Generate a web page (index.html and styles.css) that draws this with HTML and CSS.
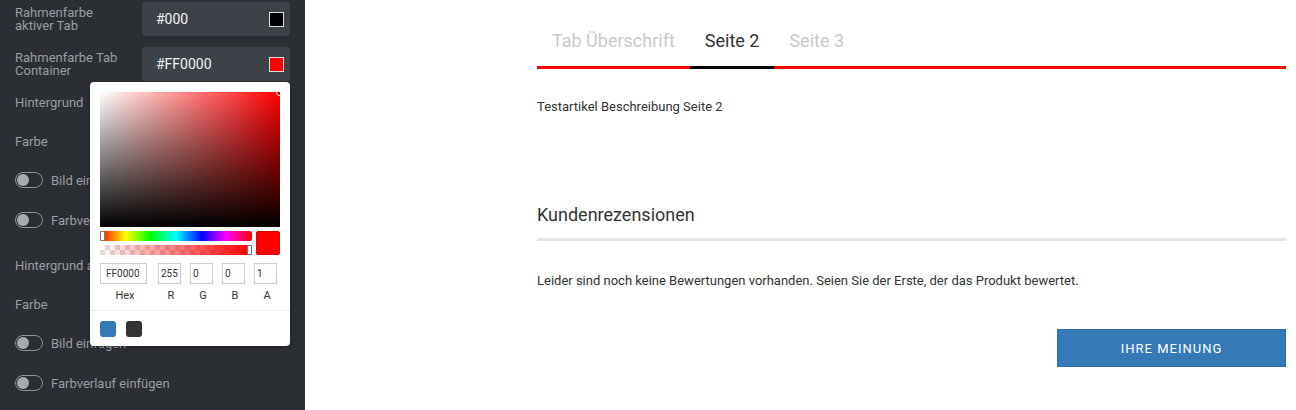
FILE: index.html
```html
<!DOCTYPE html>
<html lang="de">
<head>
<meta charset="utf-8">
<title>Tabs</title>
<link rel="stylesheet" href="styles.css">
</head>
<body>
<aside class="sidebar">
  <div class="field">
    <div class="field-label">Rahmenfarbe<br>aktiver Tab</div>
    <div class="color-input"><span>#000</span><i class="swatch swatch-black"></i></div>
  </div>
  <div class="field field-second">
    <div class="field-label">Rahmenfarbe Tab<br>Container</div>
    <div class="color-input"><span>#FF0000</span><i class="swatch swatch-red"></i></div>
  </div>
  <div class="row row-head">Hintergrund</div>
  <div class="row row-label">Farbe</div>
  <div class="row row-toggle"><span class="toggle"></span>Bild einfügen</div>
  <div class="row row-toggle"><span class="toggle"></span>Farbverlauf einfügen</div>
  <div class="row row-head row-head-2">Hintergrund aktiver Tab</div>
  <div class="row row-label">Farbe</div>
  <div class="row row-toggle"><span class="toggle"></span>Bild einfügen</div>
  <div class="row row-toggle"><span class="toggle"></span>Farbverlauf einfügen</div>

  <div class="picker">
    <div class="sat"><span class="sat-dot"></span></div>
    <div class="sliders">
      <div class="bars">
        <div class="hue"><span class="thumb thumb-left"></span></div>
        <div class="alpha"><div class="alpha-grad"></div><span class="thumb thumb-right"></span></div>
      </div>
      <div class="preview"></div>
    </div>
    <div class="values">
      <div class="val val-hex"><div class="val-box">FF0000</div><div class="val-name">Hex</div></div>
      <div class="val"><div class="val-box">255</div><div class="val-name">R</div></div>
      <div class="val"><div class="val-box">0</div><div class="val-name">G</div></div>
      <div class="val"><div class="val-box">0</div><div class="val-name">B</div></div>
      <div class="val"><div class="val-box">1</div><div class="val-name">A</div></div>
    </div>
    <div class="presets">
      <i class="preset preset-blue"></i><i class="preset preset-dark"></i>
    </div>
  </div>
</aside>

<main class="content">
  <nav class="tabs">
    <span class="tab">Tab Überschrift</span>
    <span class="tab tab-active">Seite 2</span>
    <span class="tab">Seite 3</span>
  </nav>
  <p class="desc">Testartikel Beschreibung Seite 2</p>
  <h2 class="reviews-title">Kundenrezensionen</h2>
  <p class="reviews-empty">Leider sind noch keine Bewertungen vorhanden. Seien Sie der Erste, der das Produkt bewertet.</p>
  <div class="actions"><button class="btn">Ihre Meinung</button></div>
</main>
</body>
</html>
```

FILE: styles.css
```css
* { box-sizing: border-box; }
html, body { margin: 0; padding: 0; }
body {
  display: flex;
  width: 1296px;
  height: 410px;
  overflow: hidden;
  font-family: Roboto, "Liberation Sans", sans-serif;
  background: #fff;
}

/* Sidebar */
.sidebar {
  position: relative;
  width: 305px;
  flex: none;
  height: 410px;
  background: #2b2e32;
  padding: 2px 15px 0 15px;
  display: flex;
  flex-direction: column;
  color: #9a9ea3;
  font-size: 13px;
}
.field {
  display: flex;
  align-items: center;
  height: 34px;
}
.field-second { margin-top: 11px; }
.field-label {
  width: 127px;
  line-height: 13px;
  font-size: 13px;
}
.color-input {
  width: 148px;
  height: 34px;
  background: #3d4248;
  border-radius: 3px;
  display: flex;
  align-items: center;
  justify-content: space-between;
  padding: 0 6px 0 14px;
  color: #f2f2f2;
  font-size: 14px;
}
.swatch {
  display: block;
  width: 15px;
  height: 15px;
  border: 1px solid #ddd;
}
.swatch-black { background: #000; }
.swatch-red { background: #f00; }

.row {
  display: flex;
  align-items: center;
  white-space: nowrap;
}
.row-head { height: 40px; margin-top: 1px; }
.row-head-2 { margin-top: 5px; }
.row-label { height: 38px; }
.row-toggle { height: 40px; }
.toggle {
  position: relative;
  width: 28px;
  height: 16px;
  border: 1.5px solid #8d9298;
  border-radius: 8px;
  margin-right: 8px;
}
.toggle::after {
  content: "";
  position: absolute;
  left: 1px;
  top: 0.5px;
  width: 12px;
  height: 12px;
  border-radius: 50%;
  background: #a7abb0;
}

/* Color picker popover */
.picker {
  position: absolute;
  left: 90px;
  top: 82px;
  width: 200px;
  height: 264px;
  background: #fff;
  border-radius: 4px;
  box-shadow: 0 1px 4px rgba(0,0,0,0.3);
  padding: 10px 0 0 0;
  color: #333;
}
.sat {
  position: relative;
  margin: 0 10px;
  width: 180px;
  height: 135px;
  background:
    linear-gradient(to top, #000, rgba(0,0,0,0)),
    linear-gradient(to right, #fff, rgba(255,255,255,0)),
    #f00;
}
.sat-dot {
  position: absolute;
  right: -3px;
  top: -3px;
  width: 7px;
  height: 7px;
  border: 1.5px solid #fff;
  border-radius: 50%;
}
.sliders {
  display: flex;
  gap: 4px;
  margin: 4px 10px 0 10px;
}
.bars {
  width: 152px;
  display: flex;
  flex-direction: column;
  gap: 4px;
}
.hue, .alpha {
  position: relative;
  height: 10px;
  border-radius: 2px;
}
.hue {
  background: linear-gradient(to right, #f00 0%, #ff0 17%, #0f0 33%, #0ff 50%, #00f 67%, #f0f 83%, #f00 100%);
}
.alpha {
  background-color: #fff;
  background-image:
    linear-gradient(45deg, #ddd 25%, transparent 25%, transparent 75%, #ddd 75%),
    linear-gradient(45deg, #ddd 25%, transparent 25%, transparent 75%, #ddd 75%);
  background-size: 10px 10px;
  background-position: 0 0, 5px 5px;
}
.alpha-grad {
  position: absolute;
  inset: 0;
  border-radius: 2px;
  background: linear-gradient(to right, rgba(255,0,0,0), #f00);
}
.thumb {
  position: absolute;
  top: 0;
  width: 5px;
  height: 10px;
  background: #fff;
  border: 1px solid #777;
  border-radius: 1px;
}
.thumb-left { left: 0; }
.thumb-right { right: 0; }
.preview {
  width: 24px;
  height: 24px;
  background: #f00;
  border-radius: 2px;
  border: 1px solid #d00;
}
.values {
  display: flex;
  gap: 9px;
  margin: 8px 10px 0 10px;
}
.val-hex { margin-right: 2px; }
.val { display: flex; flex-direction: column; align-items: center; }
.val-box {
  width: 23px;
  height: 21px;
  border: 1px solid #ccc;
  font-size: 10px;
  line-height: 19px;
  padding-left: 2px;
  color: #333;
  overflow: hidden;
  white-space: nowrap;
}
.val-hex .val-box { width: 47px; padding-left: 5px; }
.val-name {
  margin-top: 5px;
  font-size: 11px;
  line-height: 14px;
  color: #333;
  padding-left: 3px;
}
.presets {
  margin-top: 7px;
  border-top: 1px solid #eee;
  padding: 10px 10px 0 10px;
  display: flex;
  gap: 10px;
}
.preset {
  display: block;
  width: 16px;
  height: 16px;
  border-radius: 3px;
}
.preset-blue { background: #337ab7; }
.preset-dark { background: #333; }

/* Main content */
.content {
  flex: 1;
  padding: 0 10px 0 232px;
  color: #333;
}
.tabs {
  display: flex;
  border-bottom: 3px solid #f00;
}
.tab {
  display: block;
  font-size: 18px;
  line-height: 22px;
  padding: 30px 15px 14px 15px;
  color: #c9c9c9;
  white-space: nowrap;
}
.tab-active {
  color: #333;
  border-bottom: 3px solid #000;
  margin-bottom: -3px;
}
.desc {
  margin: 29px 0 0 0;
  font-size: 13px;
  line-height: 18px;
}
.reviews-title {
  margin: 88px 0 0 0;
  font-size: 18px;
  font-weight: 400;
  line-height: 22px;
  padding-bottom: 12px;
  border-bottom: 3px solid #e5e5e5;
}
.reviews-empty {
  margin: 31px 0 0 0;
  font-size: 13px;
  line-height: 18px;
}
.actions {
  display: flex;
  justify-content: flex-end;
  margin-top: 39px;
}
.btn {
  width: 229px;
  height: 38px;
  background: #337ab7;
  border: 1px solid #2e6da4;
  color: #fff;
  font-family: Roboto, "Liberation Sans", sans-serif;
  font-size: 13px;
  letter-spacing: 1px;
  text-transform: uppercase;
  cursor: pointer;
}
```
